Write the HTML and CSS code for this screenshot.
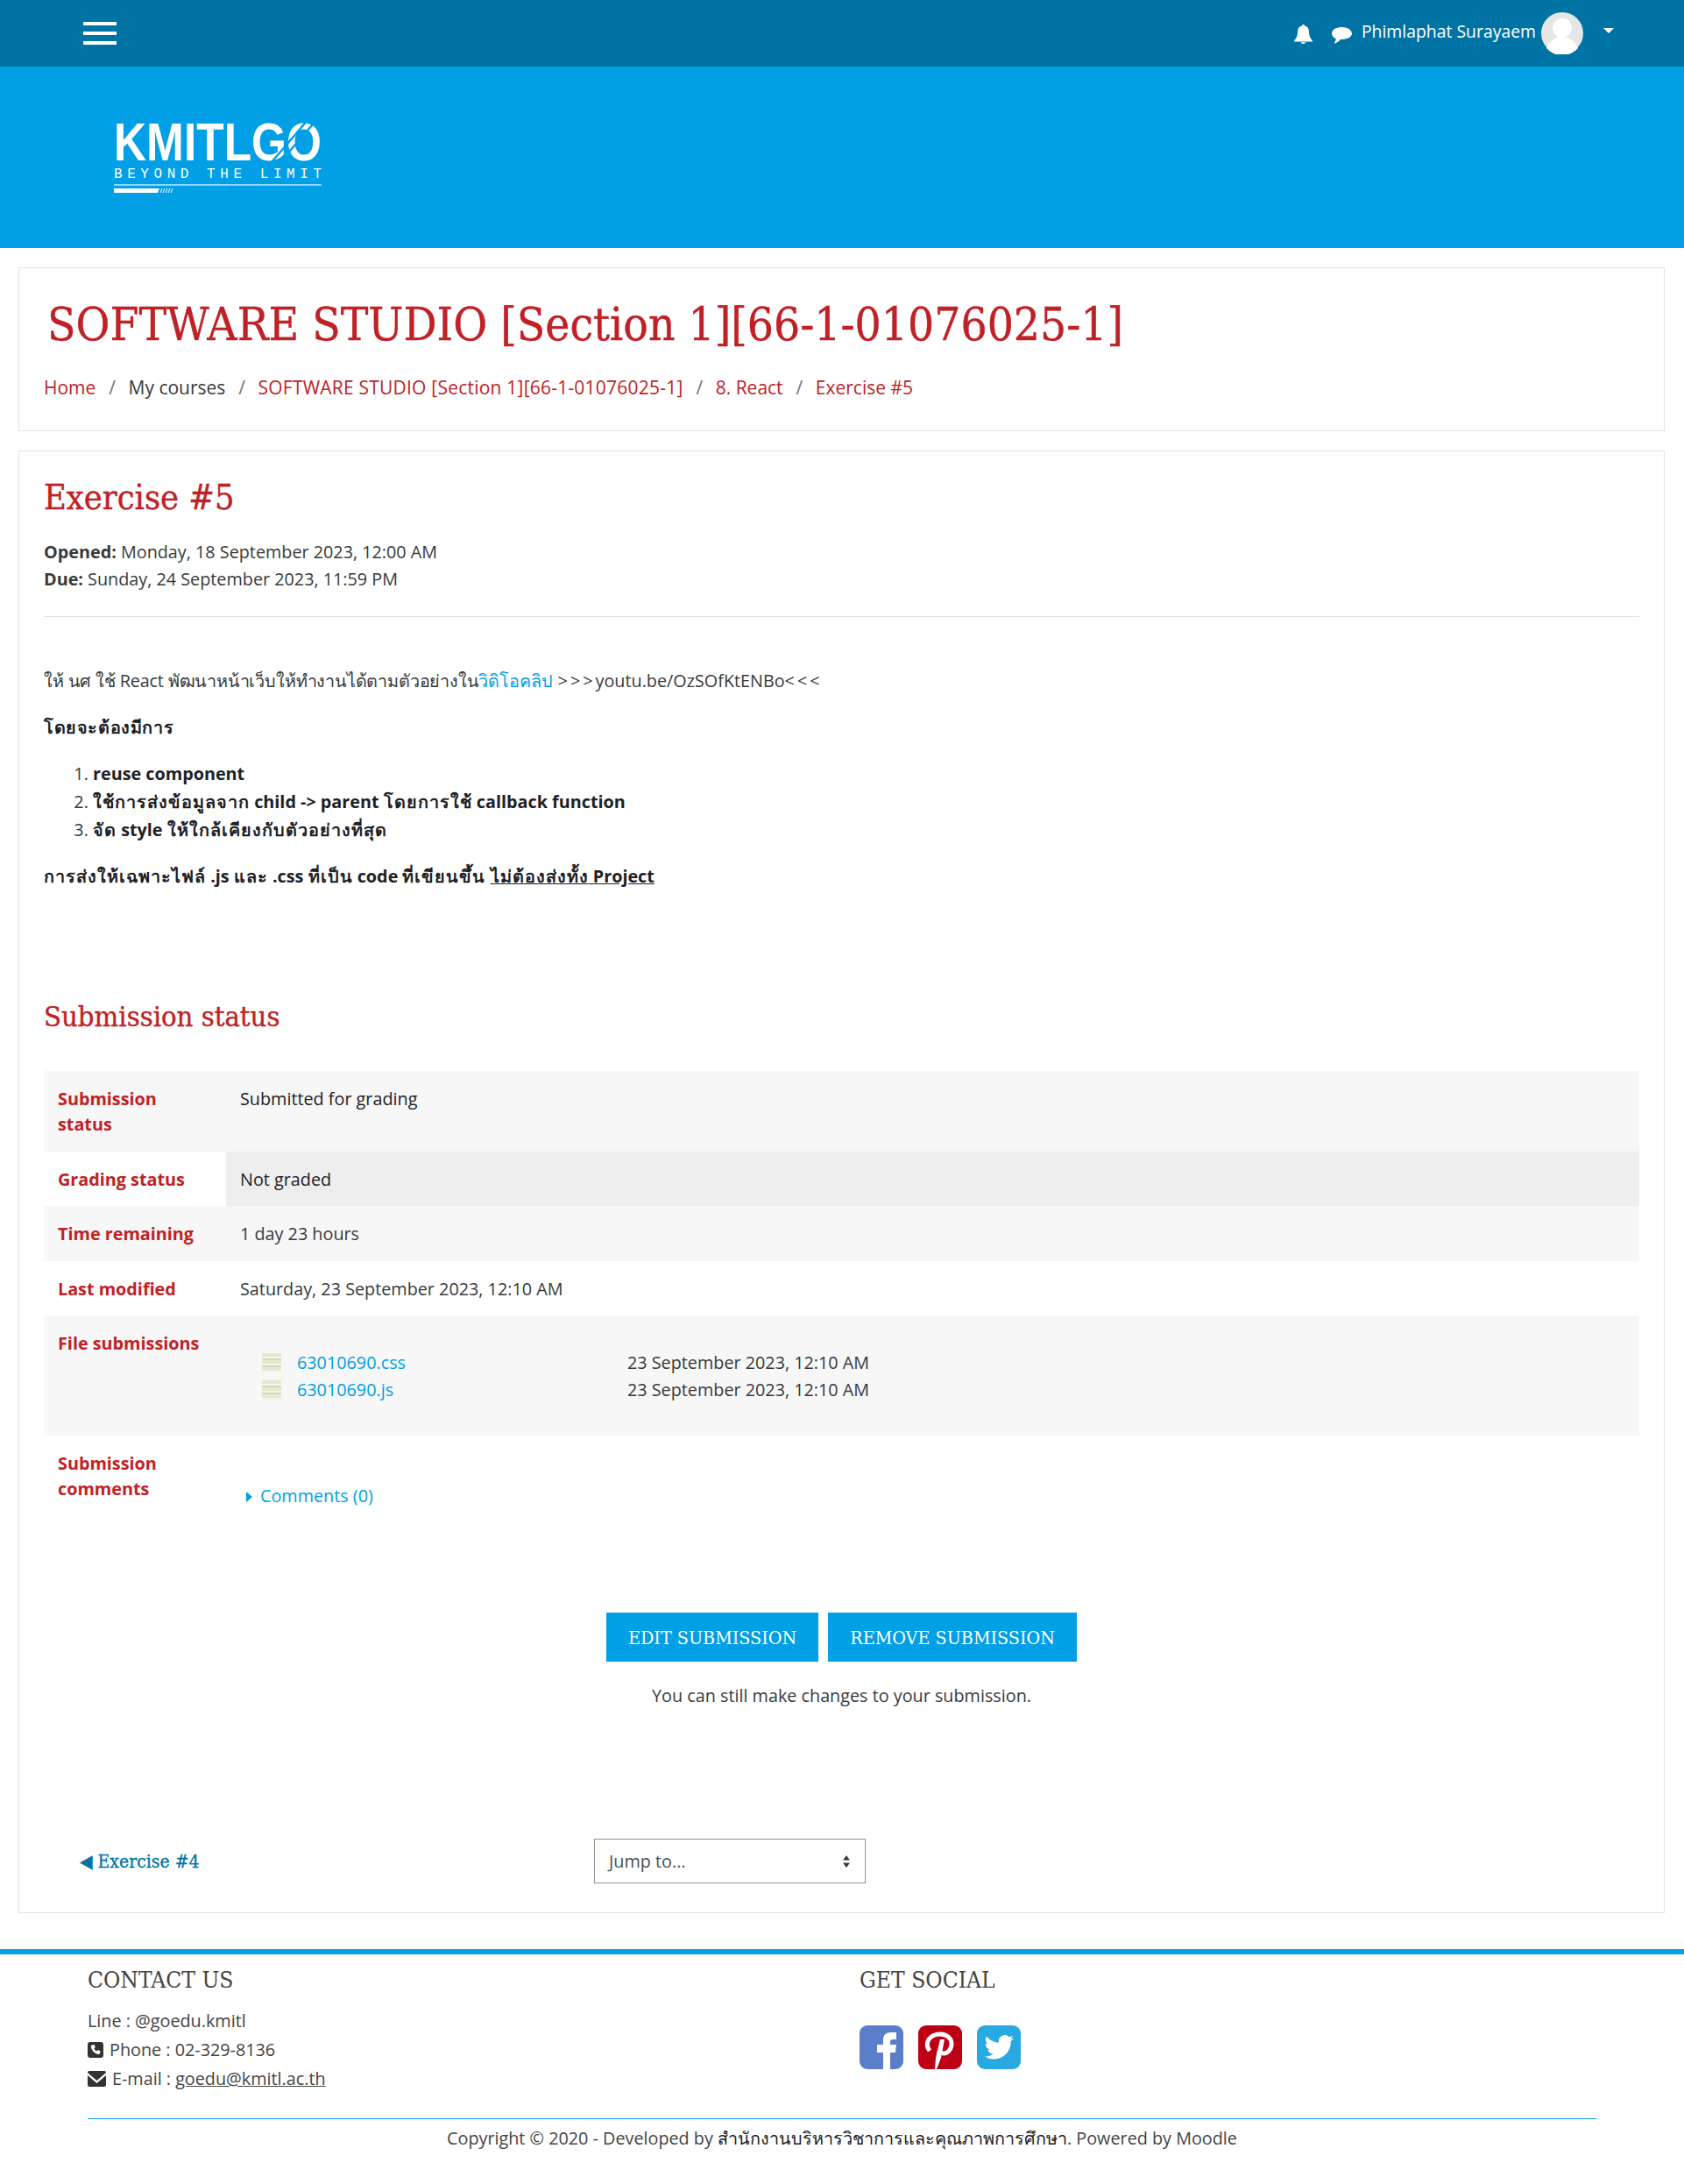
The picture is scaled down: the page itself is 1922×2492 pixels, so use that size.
FILE: index.html
```html
<!DOCTYPE html>
<html lang="en">
<head>
    <meta charset="utf-8">
    <link rel="stylesheet" href="styles.css">
    <title>Exercise #5</title>
</head>
<body>
    <header class="topbar">
        <div class="hamburger"><span></span><span></span><span></span></div>
        <div class="usermenu">
            <svg class="icon-bell" viewBox="0 0 21 22"><path d="M10.5 0c-1 0-1.6.7-1.6 1.6C5.6 2.3 4 5 4 8c0 5-1.400 7.500-4 10.500v1h21v-1C18.400 15.500 17 13 17 8c0-3-1.600-5.700-4.900-6.400C12.100.7 11.500 0 10.500 0zM7.800 20.300a2.700 1.700 0 0 0 5.400 0z"/></svg>
            <svg class="icon-chat" viewBox="0 0 23 19"><path d="M11.500 0C5.100 0 0 3.200 0 7.300c0 2.500 1.900 4.700 4.800 6-.2 1.800-1 3.600-2.300 5.200 3.200-.3 5.900-2 7.600-4.700.5 0 .9.100 1.400.100C17.900 13.900 23 10.900 23 7.300 23 3.200 17.900 0 11.500 0z"/></svg>
            <span class="username">Phimlaphat Surayaem</span>
            <svg class="avatar" viewBox="0 0 48 48"><circle cx="24" cy="24" r="24" fill="#e6e6e6"/><circle cx="24" cy="18" r="11" fill="#fff"/><path d="M6 41c3-8 10-13 18-13s15 5 18 13a24 24 0 0 1-36 0z" fill="#fff"/></svg>
            <span class="caret"></span>
        </div>
    </header>

    <div class="banner">
        <svg class="logo" viewBox="0 0 237 82">
            <text class="logo-main" x="0" y="45" textLength="237" lengthAdjust="spacingAndGlyphs">KMITLGO</text>
            <path d="M232 -2L190 47M222 -2L180 47M166 -2L140 30" stroke="#009fe6" stroke-width="2.500" fill="none"/>
            <text class="logo-tag" x="0" y="65" textLength="237" lengthAdjust="spacing">BEYOND THE LIMIT</text>
            <rect x="0" y="72" width="237" height="2" fill="#8fd5f5"/>
            <path d="M0 77h52l-2 5H0z" fill="#fff"/>
            <path d="M53 82l2-5M56 82l2-5M59 82l2-5M62 82l2-5M65 82l2-5" stroke="#fff" fill="none"/>
        </svg>
    </div>

    <main class="page">
        <section class="card course-head">
            <h1>SOFTWARE STUDIO [Section 1][66-1-01076025-1]</h1>
            <nav class="breadcrumb">
                <a href="#">Home</a><span class="sep">/</span>
                <span>My courses</span><span class="sep">/</span>
                <a class="course-link" href="#">SOFTWARE STUDIO [Section 1][66-1-01076025-1]</a><span class="sep">/</span>
                <a href="#">8. React</a><span class="sep">/</span>
                <a href="#">Exercise #5</a>
            </nav>
        </section>

        <section class="card activity">
            <h2>Exercise #5</h2>
            <div class="dates">
                <div><strong>Opened:</strong> Monday, 18 September 2023, 12:00 AM</div>
                <div><strong>Due:</strong> Sunday, 24 September 2023, 11:59 PM</div>
            </div>
            <hr class="divider">

            <div class="intro">
                <p><span class="thai-thin">ให้ นศ ใช้ React พัฒนาหน้าเว็บให้ทำงานได้ตามตัวอย่างใน</span><a href="#">วิดิโอคลิป</a> <span class="arrows">&gt;&gt;&gt;</span>youtu.be/OzSOfKtENBo<span class="arrows">&lt;&lt;&lt;</span></p>
                <p><strong class="thai-head">โดยจะต้องมีการ</strong></p>
                <ol>
                    <li><strong>reuse component</strong></li>
                    <li><strong><span class="thai">ใช้การส่งข้อมูลจาก</span> child -&gt; parent <span class="thai">โดยการใช้</span> callback function</strong></li>
                    <li><strong><span class="thai">จัด</span> style <span class="thai">ให้ใกล้เคียงกับตัวอย่างที่สุด</span></strong></li>
                </ol>
                <p><strong><span class="thai">การส่งให้เฉพาะไฟล์</span> .js <span class="thai">และ</span> .css <span class="thai">ที่เป็น</span> code <span class="thai">ที่เขียนขึ้น</span> <u><span class="thai">ไม่ต้องส่งทั้ง</span> Project</u></strong></p>
            </div>

            <h3>Submission status</h3>
            <table class="status">
                <tr class="shade">
                    <th>Submission status</th>
                    <td class="dark">Submitted for grading</td>
                </tr>
                <tr>
                    <th>Grading status</th>
                    <td class="dark hl">Not graded</td>
                </tr>
                <tr class="shade">
                    <th>Time remaining</th>
                    <td>1 day 23 hours</td>
                </tr>
                <tr>
                    <th>Last modified</th>
                    <td>Saturday, 23 September 2023, 12:10 AM</td>
                </tr>
                <tr class="shade">
                    <th>File submissions</th>
                    <td class="files">
                        <div class="file">
                            <span class="file-name"><i class="file-icon"></i><a href="#">63010690.css</a></span>
                            <span>23 September 2023, 12:10 AM</span>
                        </div>
                        <div class="file">
                            <span class="file-name"><i class="file-icon"></i><a href="#">63010690.js</a></span>
                            <span>23 September 2023, 12:10 AM</span>
                        </div>
                    </td>
                </tr>
                <tr>
                    <th>Submission comments</th>
                    <td class="comments"><a href="#"><i class="arrow-right"></i>Comments (0)</a></td>
                </tr>
            </table>

            <div class="actions">
                <div class="buttons">
                    <button type="button">Edit submission</button>
                    <button type="button">Remove submission</button>
                </div>
                <p>You can still make changes to your submission.</p>
            </div>

            <div class="jump-row">
                <a class="prev" href="#">◀ Exercise #4</a>
                <div class="jump">
                    <span>Jump to...</span>
                    <svg viewBox="0 0 10 14"><path d="M5 0l4 5.500H1zM5 14L1 8.500h8z"/></svg>
                </div>
            </div>
        </section>
    </main>

    <footer class="site-footer">
        <div class="footer-cols">
            <div class="contact">
                <h4>CONTACT US</h4>
                <div>Line : @goedu.kmitl</div>
                <div class="contact-line">
                    <svg class="small-icon" viewBox="0 0 18 18"><rect width="18" height="18" rx="3" fill="#333"/><path d="M5 3.500l2.500-.5 1.300 3-1.500 1.200c.6 1.500 1.600 2.600 3 3.300l1.300-1.500 3 1.400-.6 2.600c-.2.800-1 1.200-1.800 1C7.700 13 4.800 10 3.800 5.300c-.1-.8.400-1.600 1.200-1.800z" fill="#fff"/></svg>
                    Phone : 02-329-8136
                </div>
                <div class="contact-line">
                    <svg class="small-icon wide" viewBox="0 0 21 18"><rect width="21" height="18" rx="2" fill="#333"/><path d="M0 2l10.500 9L21 2v3l-10.500 9L0 5z" fill="#fff"/></svg>
                    <span>E-mail : <u>goedu@kmitl.ac.th</u></span>
                </div>
            </div>
            <div class="social">
                <h4>GET SOCIAL</h4>
                <div class="social-icons">
                    <svg viewBox="0 0 50 50"><rect width="50" height="50" rx="9" fill="#5b7dca"/><path d="M27 50V31h-7v-9h7v-6c0-5 3-8 9-8h6v8h-4c-2 0-3 1-3 3v3h7l-1 9h-6v19z" fill="#fff"/></svg>
                    <svg viewBox="0 0 50 50"><rect width="50" height="50" rx="9" fill="#bd0013"/><path d="M13 29c-3-4-4-8-1-13 3-4 8-6 13-6 8 0 13 5 13 11s-4 11-9 11c-3 0-5-1-6-3" fill="none" stroke="#fff" stroke-width="5"/><path d="M25 16h5l-4 21-5 13h-2l1-13z" fill="#fff"/></svg>
                    <svg viewBox="0 0 50 50"><rect width="50" height="50" rx="9" fill="#29a9e1"/><path transform="translate(8.500 8) scale(1.400)" d="M23.950 4.570a10 10 0 0 1-2.820.770 4.960 4.960 0 0 0 2.160-2.720c-.950.550-2 .950-3.120 1.180a4.920 4.920 0 0 0-8.380 4.480C7.690 8.090 4.070 6.130 1.640 3.160a4.820 4.820 0 0 0-.660 2.470c0 1.710.870 3.210 2.190 4.100a4.900 4.900 0 0 1-2.230-.610v.060a4.920 4.920 0 0 0 3.950 4.830 5 5 0 0 1-2.210.080 4.940 4.940 0 0 0 4.600 3.420A9.870 9.870 0 0 1 0 19.540a14 14 0 0 0 7.560 2.210c9.050 0 14-7.500 14-13.980 0-.210 0-.420-.020-.630a9.940 9.940 0 0 0 2.460-2.550z" fill="#fff"/></svg>
                </div>
            </div>
        </div>
        <div class="copyright">Copyright © 2020 - Developed by <span class="dark">สำนักงานบริหารวิชาการและคุณภาพการศึกษา</span>. Powered by Moodle</div>
    </footer>
</body>
</html>
```

FILE: styles.css
```css
* {
    margin: 0;
    padding: 0;
    box-sizing: border-box;
}

body {
    font-family: "Open Sans", "Noto Sans", "Noto Sans CJK SC", sans-serif;
    font-size: 19.8px;
    color: #373a3c;
    background-color: #fff;
}

a {
    color: #009fe6;
    text-decoration: none;
}

h1, h2, h3, h4, button {
    font-family: "DejaVu Serif", serif;
    font-stretch: condensed;
    font-weight: 400;
}

h1, h2, h3 {
    -webkit-text-stroke: 0.4px #c02126;
}

/* Top bar */
.topbar {
    height: 76px;
    background-color: #0073a5;
    display: flex;
    align-items: center;
    justify-content: space-between;
    padding: 0 80px 0 95px;
}

.hamburger {
    width: 38px;
    display: flex;
    flex-direction: column;
    gap: 7px;
}

.hamburger span {
    height: 4px;
    background-color: #fff;
}

.usermenu {
    display: flex;
    align-items: center;
    color: #fff;
    fill: #fff;
}

.icon-bell {
    width: 21px;
    height: 22px;
    margin-right: 22px;
    margin-top: 2px;
}

.icon-chat {
    width: 23px;
    height: 19px;
    margin-right: 11px;
    margin-top: 4px;
}

.username {
    font-size: 19.4px;
    margin-right: 6px;
    position: relative;
    top: -3px;
}

.avatar {
    width: 48px;
    height: 48px;
    margin-right: 23px;
}

.caret {
    width: 0;
    height: 0;
    border-left: 6px solid transparent;
    border-right: 6px solid transparent;
    border-top: 6px solid #fff;
    margin-top: -6px;
}

/* Banner with logo */
.banner {
    height: 207px;
    background-color: #009fe6;
    padding: 62px 0 0 130px;
}

.logo {
    display: block;
    width: 237px;
    height: 82px;
    overflow: visible;
}

.logo-main {
    font-family: "Liberation Sans", sans-serif;
    font-weight: 700;
    font-size: 62px;
    fill: #fff;
}

.logo-tag {
    font-family: "Liberation Mono", monospace;
    font-size: 16px;
    fill: #fff;
}

/* Page */
.page {
    padding: 22px 22px 41px 21px;
}

.card {
    border: 1px solid #e3e3e3;
    background-color: #fff;
}

.course-head {
    height: 187px;
    padding: 30px 28px 0;
}

.course-head h1 {
    font-size: 52.8px;
    line-height: 68px;
    color: #c02126;
    padding-left: 4px;
}

.breadcrumb {
    margin-top: 23px;
    font-size: 21px;
    line-height: 30px;
    white-space: nowrap;
}

.breadcrumb a {
    color: #c02126;
}

.breadcrumb .course-link {
    letter-spacing: 0.22px;
}

.sep {
    margin: 0 9px 0 15px;
    color: #6c757d;
}

.activity {
    margin-top: 22px;
    padding: 30px 28px 33px;
}

.activity h2 {
    font-size: 39.4px;
    line-height: 44px;
    color: #c02126;
}

.dates {
    margin-top: 25px;
    line-height: 31px;
}

.divider {
    border: 0;
    border-top: 1px solid #e3e3e3;
    margin-top: 27px;
}

.intro {
    margin-top: 57px;
    line-height: 32px;
}

.intro p {
    margin-bottom: 21px;
}

.intro ol {
    padding-left: 56px;
    margin-bottom: 21px;
}

.intro strong {
    color: #1d2125;
}

.thai {
    letter-spacing: 1px;
}

.thai-head {
    letter-spacing: 0.6px;
}

.thai-thin {
    letter-spacing: -0.18px;
}

.arrows {
    letter-spacing: 3px;
}

h3 {
    font-size: 32.5px;
    line-height: 40px;
    color: #c02126;
    margin-top: 124px;
}

/* Status table */
.status {
    width: 100%;
    border-collapse: collapse;
    margin-top: 42px;
    line-height: 29px;
}

.status th {
    width: 208px;
    padding: 17px 16px 16.5px;
    text-align: left;
    vertical-align: top;
    color: #c02126;
}

.status td {
    padding: 17px 16px 16.5px;
    vertical-align: top;
}

.shade {
    background-color: #f7f7f7;
}

.dark {
    color: #1d2125;
}

.hl {
    background-color: #eee;
}

.status .files {
    padding-top: 38px;
    padding-bottom: 37px;
}

.file {
    display: flex;
    align-items: center;
    line-height: 31px;
}

.file-name {
    width: 442px;
    display: flex;
    align-items: center;
    padding-left: 25px;
}

.file-icon {
    width: 22px;
    height: 22px;
    margin-right: 18px;
    background: repeating-linear-gradient(#e3ead0 0, #e3ead0 4px, #f3f6e8 4px, #f3f6e8 6px, #cfdac2 6px, #cfdac2 8px);
}

.status .comments {
    padding-top: 54px;
    padding-bottom: 40px;
}

.arrow-right {
    display: inline-block;
    width: 0;
    height: 0;
    border-top: 6px solid transparent;
    border-bottom: 6px solid transparent;
    border-left: 7px solid #009fe6;
    margin: 0 9px 0 7px;
}

/* Buttons */
.actions {
    text-align: center;
    margin-top: 79px;
}

.buttons {
    display: flex;
    justify-content: center;
    gap: 11px;
}

button {
    height: 56px;
    padding: 0 25px;
    border: 0;
    color: #fff;
    background-color: #009fe6;
    font-size: 21.3px;
    text-transform: uppercase;
    cursor: pointer;
}

.actions p {
    margin-top: 24px;
    line-height: 30px;
}

/* Previous link and jump menu */
.jump-row {
    display: flex;
    align-items: center;
    margin-top: 148px;
    padding-left: 41px;
}

.prev {
    font-family: "DejaVu Serif", serif;
    font-stretch: condensed;
    -webkit-text-stroke: 0.3px #0073a5;
    color: #0073a5;
    width: 587px;
    font-size: 21px;
}

.jump {
    width: 310px;
    height: 51px;
    border: 1px solid #8f959e;
    display: flex;
    align-items: center;
    justify-content: space-between;
    padding: 0 16px;
    color: #495057;
}

.jump svg {
    width: 10px;
    height: 14px;
    fill: #343a40;
}

/* Footer */
.site-footer {
    border-top: 6px solid #009fe6;
    padding: 12px 100px 26px;
    color: #444;
}

.footer-cols {
    display: flex;
    height: 176px;
    border-bottom: 1px solid #0f9fdc;
}

.contact {
    width: 881px;
    line-height: 33px;
}

.site-footer h4 {
    font-size: 26.2px;
    line-height: 34px;
    margin-bottom: 13px;
}

.contact-line {
    display: flex;
    align-items: center;
    gap: 7px;
}

.small-icon {
    width: 18px;
    height: 18px;
}

.small-icon.wide {
    width: 21px;
}

.social-icons {
    display: flex;
    gap: 17px;
    margin-top: 35px;
}

.social-icons svg {
    width: 50px;
    height: 50px;
}

.copyright {
    text-align: center;
    line-height: 30px;
    margin-top: 7px;
}
```
